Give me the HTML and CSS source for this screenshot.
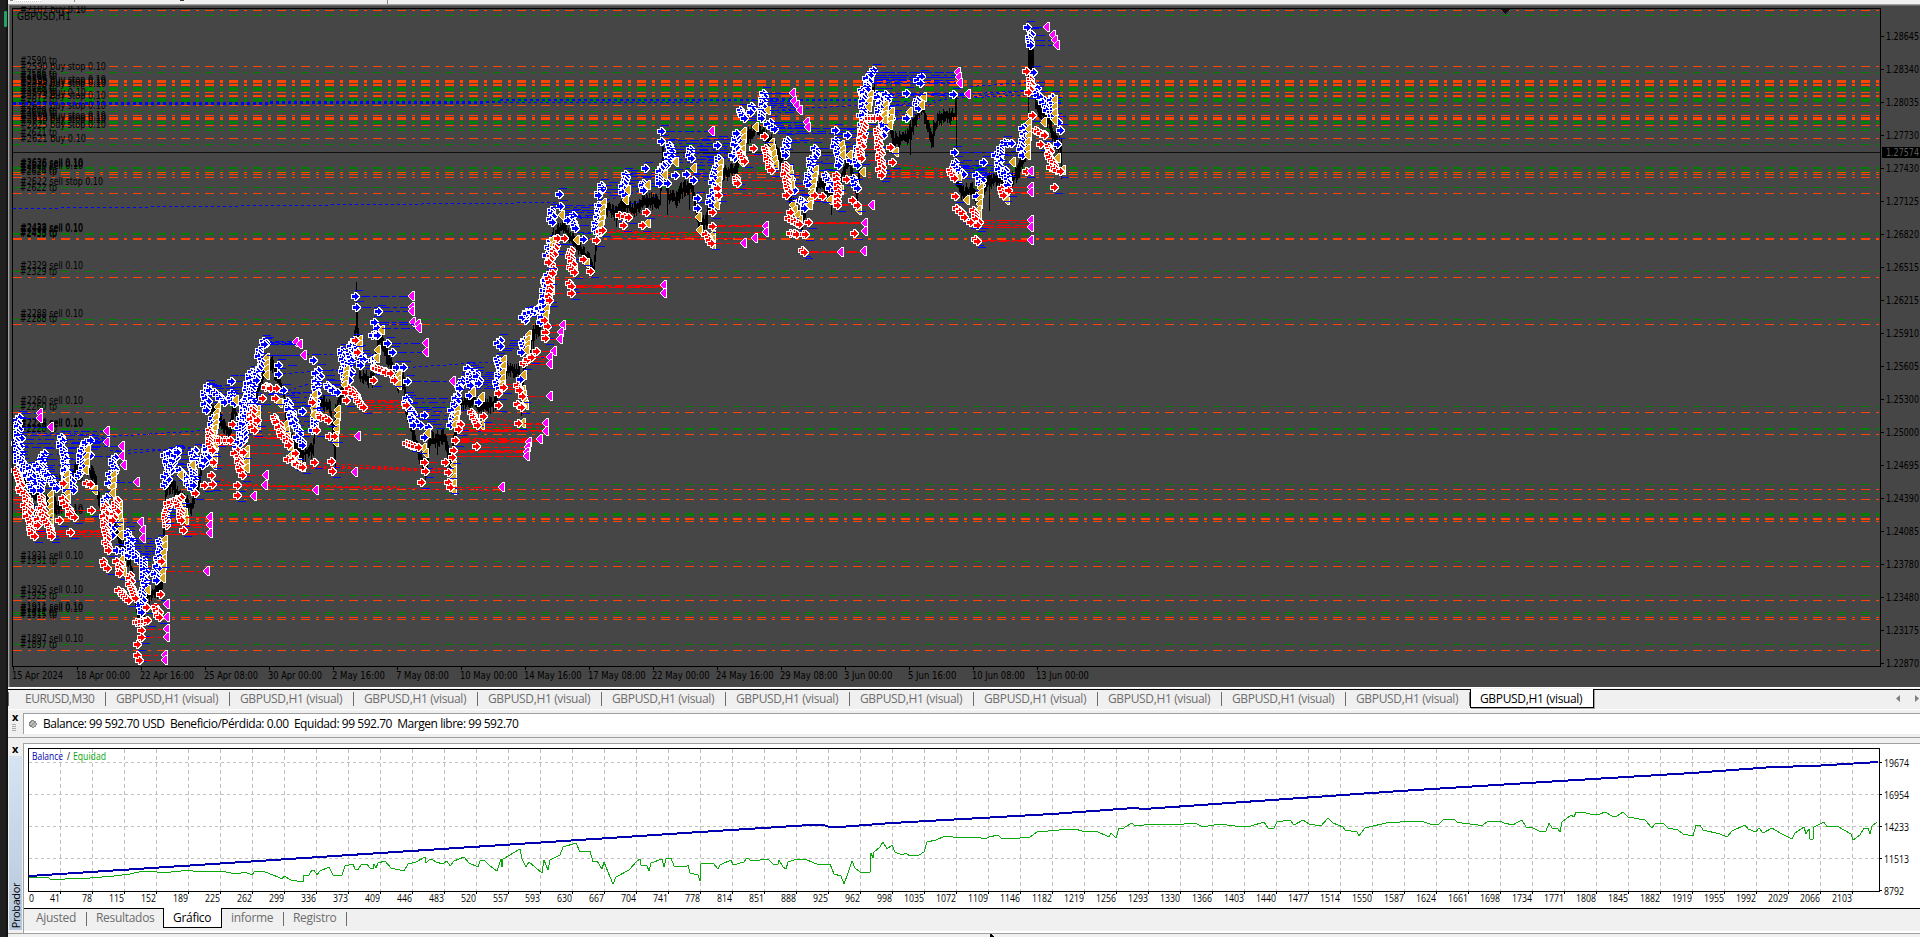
FILE: index.html
```html
<!DOCTYPE html>
<html lang="es">
<head>
    <meta charset="UTF-8">
    <meta name="viewport" content="width=device-width, initial-scale=1.0">
    <title>Probador - GBPUSD,H1 (visual)</title>
    <link rel="stylesheet" href="styles.css">
</head>
<body>
    <div class="edge"><span class="edge-mark"></span></div>
    <div class="app">
        <div class="toolbar">
            <span class="tool-a"></span><span class="tool-b"></span><span class="tool-c"></span><span class="tool-d"></span><span class="tool-e"></span>
        </div>
        <div class="chart-window">
            <svg id="price-chart" width="1911" height="681" viewBox="9 6 1911 681">
                <defs>
                    <g id="buy">
                        <path class="outline" d="M-4 -2h3v-2h3v1h1v1h1v1h1v3h-1v1h-1v1h-1v1h-3v-2h-3z"/>
                        <path fill="#0000ff" d="M-3 -1h3v-2h1v1h1v1h1v1h1v1h-1v1h-1v1h-1v1h-1v-2h-3z"/>
                    </g>
                    <g id="sell">
                        <path class="outline" d="M-4 -2h3v-2h3v1h1v1h1v1h1v3h-1v1h-1v1h-1v1h-3v-2h-3z"/>
                        <path fill="#ff0000" d="M-3 -1h3v-2h1v1h1v1h1v1h1v1h-1v1h-1v1h-1v1h-1v-2h-3z"/>
                    </g>
                    <g id="close">
                        <path class="outline" d="M-4 -1h1v-1h1v-1h1v-1h1v-1h3v10h-3v-1h-1v-1h-1v-1h-1v-1h-1z"/>
                        <path fill="#daa520" d="M-3 -1h1v-1h1v-1h1v-1h2v8h-2v-1h-1v-1h-1v-1h-1z"/>
                    </g>
                    <g id="exit">
                        <path class="outline" d="M-4 -1h1v-1h1v-1h1v-1h1v-1h3v10h-3v-1h-1v-1h-1v-1h-1v-1h-1z"/>
                        <path fill="#ff00ff" d="M-3 -1h1v-1h1v-1h1v-1h2v8h-2v-1h-1v-1h-1v-1h-1z"/>
                    </g>
                </defs>
            </svg>
        </div>
        <div class="chart-tabs" id="chart-tabs"></div>
        <div class="status">
            <div class="grip"><b>x</b><i></i></div>
            <div class="status-box">
                <svg width="8" height="8" viewBox="0 0 8 8"><circle cx="4" cy="4" r="3.2" fill="#bbb" stroke="#888"/><path d="M2 6L6 2" stroke="#888"/></svg>
                <span>Balance: 99 592.70 USD&nbsp; Beneficio/Pérdida: 0.00&nbsp; Equidad: 99 592.70&nbsp; Margen libre: 99 592.70</span>
            </div>
        </div>
        <div class="tester">
            <div class="tester-side"><b>x</b><div class="tester-title"><span>Probador</span></div></div>
            <div class="tester-main">
                <svg id="balance-chart" width="1896" height="164" viewBox="24 744 1896 164"></svg>
                <div class="tester-tabs">
                    <span class="tab t1">Ajusted</span>
                    <span class="tab t2">Resultados</span>
                    <span class="tab active t3">Gráfico</span>
                    <span class="tab t4">informe</span>
                    <span class="tab t5">Registro</span>
                </div>
            </div>
        </div>
        <div class="footer">
            <svg class="cursor" width="5" height="3" viewBox="0 0 5 3"><path d="M0 0h2v1h1v1h1v1h-4z" fill="#000"/></svg>
        </div>
    </div>
    <script src="chart.js"></script>
</body>
</html>
```
FILE: styles.css
```css
* {
    box-sizing: border-box;
}
body {
    margin: 0;
    width: 1920px;
    height: 937px;
    overflow: hidden;
    display: flex;
    background-color: #f0f0f0;
    font-family: "Open Sans", "Noto Sans", sans-serif;
    font-size: 12px;
    color: #000;
}
.edge {
    width: 8px;
    height: 937px;
    background: linear-gradient(90deg, #202020 6px, #121212 6px);
    padding-top: 11px;
}
.edge-mark {
    display: block;
    width: 3px;
    height: 16px;
    margin-left: 4px;
    border-radius: 1px;
    background-color: #21a366;
}
.app {
    width: 1912px;
    display: flex;
    flex-direction: column;
}
.toolbar {
    height: 4px;
    display: flex;
    background-color: #f0f0f0;
}
.toolbar span {
    height: 1px;
    background-color: #888;
}
.toolbar .tool-a {
    width: 3px;
    margin-left: 2px;
}
.toolbar .tool-b {
    width: 25px;
    height: 2px;
    margin-left: 3px;
    background-color: #fff;
    border-bottom: 1px dotted #ccc;
}
.toolbar .tool-c {
    width: 1px;
    height: 2px;
    margin-left: 33px;
}
.toolbar .tool-d {
    width: 4px;
    margin-left: 105px;
    background-color: #333;
}
.toolbar .tool-e {
    width: 1px;
    height: 4px;
    margin-left: 203px;
}
.chart-window {
    height: 683px;
    background-color: #464646;
    border-top: 1px solid #a0a0a0;
    border-left: 1px solid #a0a0a0;
    box-shadow: inset 1px 1px 0 #696969;
    padding-top: 1px;
}
svg {
    display: block;
    shape-rendering: crispEdges;
}
#price-chart text, #balance-chart text {
    font-family: "DejaVu Sans Condensed", "DejaVu Sans", sans-serif;
    font-stretch: condensed;
    font-size: 10px;
}
#balance-chart text {
    font-family: "Open Sans", sans-serif;
    font-stretch: normal;
}
.outline {
    fill: #fff;
}
.chart-tabs {
    height: 23px;
    display: flex;
    padding-top: 2px;
    border-top: 1px solid #fff;
    background: linear-gradient(#f0f0f0 1px, #000 1px, #000 2px, #f0f0f0 2px);
    border-bottom: 1px solid #fff;
    color: #6d6d6d;
    position: relative;
}
.chart-tabs .tab {
    width: 124px;
    height: 14px;
    margin-top: 2px;
    padding-left: 10px;
    line-height: 13px;
    letter-spacing: -0.35px;
    border-right: 1px solid #6d6d6d;
    white-space: nowrap;
}
.chart-tabs .tab:first-child {
    width: 98px;
    padding-left: 16px;
    letter-spacing: -0.5px;
    border-left: 1px solid #6d6d6d;
}
.chart-tabs .tab:nth-last-child(3) {
    border-right: 0;
}
.chart-tabs .active {
    height: 19px;
    margin-top: -1px;
    padding-top: 3px;
    padding-left: 9px;
    background-color: #fff;
    color: #000;
    border: 1px solid #000 !important;
    border-top: 0 !important;
    box-shadow: 1px 1px 0 #a0a0a0;
}
.scroll {
    width: 4px;
    height: 7px;
    background-color: #808080;
    margin: 5px 0 0 302px;
    clip-path: polygon(100% 0, 0 50%, 100% 100%);
}
.scroll.right {
    margin-left: 15px;
    clip-path: polygon(0 0, 100% 50%, 0 100%);
}
.status {
    height: 28px;
    display: flex;
    padding-top: 3px;
    border-bottom: 1px solid #a0a0a0;
}
.grip {
    width: 15px;
    padding-left: 4px;
}
.grip b, .tester-side b {
    display: block;
    height: 11px;
    font-size: 11px;
    line-height: 7px;
}
.grip i {
    display: block;
    width: 4px;
    height: 8px;
    background: repeating-linear-gradient(#aaa 0 1px, transparent 1px 2px);
}
.status-box {
    flex: 1;
    height: 21px;
    display: flex;
    align-items: center;
    padding-left: 5px;
    background-color: #fff;
    border-top: 1px solid #a0a0a0;
    border-left: 1px solid #a0a0a0;
    white-space: nowrap;
}
.status-box span {
    margin-left: 6px;
    margin-top: -1px;
    letter-spacing: -0.46px;
}
.tester {
    height: 190px;
    display: flex;
    margin-top: 5px;
}
.tester-side {
    width: 15px;
    padding: 2px 0 0 1px;
}
.tester-side b {
    padding-left: 3px;
}
.tester-title {
    width: 13px;
    height: 174px;
    background: linear-gradient(#d6e4f3, #b6c6da);
    writing-mode: vertical-rl;
    display: flex;
    align-items: center;
}
.tester-title span {
    transform: rotate(180deg);
    margin-top: 127px;
    line-height: 13px;
    font-size: 11px;
    letter-spacing: -0.4px;
}
.tester-main {
    width: 1897px;
    border-top: 1px solid #a0a0a0;
    border-left: 1px solid #a0a0a0;
    background-color: #fff;
}
.tester-tabs {
    height: 23px;
    display: flex;
    background-color: #f0f0f0;
    border-top: 1px solid #000;
    color: #6d6d6d;
    letter-spacing: -0.3px;
}
.tester-tabs .tab {
    height: 14px;
    margin-top: 3px;
    line-height: 12px;
    border-right: 1px solid #6d6d6d;
}
.tester-tabs .t1 {
    width: 63px;
    padding-left: 12px;
}
.tester-tabs .t2 {
    width: 76px;
    padding-left: 9px;
    border-right: 0;
}
.tester-tabs .active {
    width: 59px;
    height: 20px;
    margin-top: -1px;
    padding: 4px 0 0 9px;
    background-color: #fff;
    color: #000;
    border: 1px solid #000;
    border-top: 0;
}
.tester-tabs .t4 {
    width: 62px;
    padding-left: 9px;
}
.tester-tabs .t5 {
    width: 63px;
    padding-left: 9px;
}
.footer {
    height: 4px;
    border-top: 1px solid #a0a0a0;
    padding-left: 982px;
}
```
FILE: chart.js
```js
const NS = 'http://www.w3.org/2000/svg';
const chart = document.getElementById('price-chart');
const tester = document.getElementById('balance-chart');

const add = (svg, name, attrs, text) => {
    const node = document.createElementNS(NS, name);
    for (const key in attrs) node.setAttribute(key, attrs[key]);
    if (text !== undefined) node.textContent = text;
    svg.appendChild(node);
    return node;
};
const label = (svg, x, y, text, width, fill = '#000') =>
    add(svg, 'text', { x: x, y: y, fill: fill, textLength: width, lengthAdjust: 'spacingAndGlyphs' }, text);

let seed = 7;
const rnd = () => {
    seed = (seed * 16807) % 2147483647;
    return seed / 2147483647;
};

// order levels
const levels = (rows, color) => {
    const d = rows.map(y => `M13 ${y + 0.5}H1880`).join('');
    add(chart, 'path', { d: d, stroke: color, 'stroke-dasharray': '9 6 3 6', fill: 'none' });
};
levels([15, 72, 87, 88, 89, 90, 98, 99, 100, 101, 111, 121, 122, 123, 128, 130, 144, 167, 168, 171, 187, 233, 234, 271, 319,
    406, 428, 429, 484, 493, 513, 514, 515, 561, 595, 612, 614, 644], '#008000');
levels([10, 66, 80, 81, 82, 84, 85, 92, 95, 96, 105, 115, 117, 118, 119, 125, 138, 172, 174, 177, 193, 238, 239, 277, 324,
    412, 434, 489, 499, 518, 519, 521, 566, 600, 617, 619, 650], '#ff4500');
add(chart, 'path', { d: 'M13 152.5H1880', stroke: '#101010' });

// order labels
label(chart, 17, 20, 'GBPUSD,H1', 54);
const orders = [
    [13, '2107 buy 0.10'], [64, '2590 tp'], [70, '2590 buy stop 0.10'], [77, '2586 tp'], [79, '2588 tp'], [83, '2586 buy stop 0.10'],
    [85, '2593 buy stop 0.10'], [87, '2588 buy stop 0.10'], [91, '2579 tp'], [94, '2580 tp'], [96, '2579 buy 0.10'], [99, '2573 buy stop 0.10'],
    [103, '2617 tp'], [109, '2617 buy stop 0.10'], [114, '2609 tp'], [116, '2610 tp'], [119, '2609 buy stop 0.10'], [121, '2618 buy stop 0.10'],
    [123, '2610 buy stop 0.10'], [128, '2625 buy stop 0.10'], [136, '2621 tp'], [142, '2621 buy 0.10'],
    [166, '2628 sell 0.10'], [167, '2626 sell 0.10'], [169, '2620 sell 0.10'], [173, '2626 tp'], [175, '2624 tp'],
    [185, '2622 sell stop 0.10'], [191, '2622 tp'], [231, '2438 sell 0.10'], [232, '2433 sell 0.10'], [236, '2438 tp'], [237, '2433 tp'],
    [269, '2329 sell 0.10'], [275, '2329 tp'], [317, '2288 sell 0.10'], [322, '2288 tp'], [404, '2260 sell 0.10'], [410, '2260 tp'],
    [426, '2224 sell 0.10'], [427, '2228 sell 0.10'], [432, '2228 tp'], [482, '2107 sell 0.10'], [512, '2087 sell 0.10'], [514, '2084 sell 0.10'],
    [559, '1931 sell 0.10'], [564, '1931 tp'], [593, '1925 sell 0.10'], [599, '1925 tp'], [610, '1911 sell 0.10'], [612, '1916 sell 0.10'],
    [616, '1911 tp'], [618, '1915 tp'], [642, '1897 sell 0.10'], [648, '1897 tp']
];
orders.forEach(([y, text]) => {
    const width = text.includes('stop') ? (text.includes('buy') ? 86 : 83) : text.includes('sell') ? 63 : text.includes('buy') ? 66 : 37;
    label(chart, 20, y, '#' + text, width);
});

// long dashed trade lines
const dashed = (x1, y1, x2, y2, color, dash = '3 3', width = 1) =>
    add(chart, 'path', { d: `M${x1} ${y1 + 0.5}L${x2} ${y2 + 0.5}`, stroke: color, 'stroke-dasharray': dash, 'stroke-width': width });
[[13, 208, 560, 202], [95, 437, 205, 430], [110, 455, 205, 445], [110, 450, 190, 448], [270, 355, 345, 354], [277, 374, 350, 368],
 [288, 390, 320, 380], [407, 367, 500, 361], [590, 205, 660, 184], [770, 110, 870, 104], [810, 168, 860, 140],
 [890, 122, 953, 94], [890, 105, 1028, 90], [960, 94, 1028, 90], [970, 86, 1028, 82], [975, 97, 1035, 94],
 [568, 222, 660, 195], [700, 145, 740, 150], [20, 432, 95, 434], [250, 395, 315, 392]].forEach(l => dashed(...l, '#0000ff'));
[[13, 102, 270, 102], [270, 101, 500, 101], [500, 100, 870, 99]].forEach(l => dashed(...l, '#0000ff', '3 3', 2));
dashed(13, 104, 270, 104, '#0000ff', '3 3');
dashed(270, 103, 700, 102, '#0000ff', '3 3');
[[210, 485, 505, 490], [300, 465, 450, 472], [305, 468, 450, 468], [312, 462, 450, 470], [360, 402, 410, 400],
 [604, 230, 700, 238], [605, 229, 708, 235], [628, 213, 700, 218], [880, 162, 955, 170], [210, 475, 235, 484],
 [485, 416, 518, 422], [365, 404, 408, 407]].forEach(l => dashed(...l, '#ff0000'));
dashed(207, 484, 400, 487, '#ff0000', '3 3', 2);
dashed(300, 466, 450, 469, '#ff0000', '3 3', 2);

// bundles of horizontal links: x1, x2, y1, y2, count
const bundle = (list, color) => list.forEach(([x1, x2, y1, y2, n]) => {
    for (let i = 0; i < n; i++) {
        const y = Math.round(y1 + (y2 - y1) * (n > 1 ? i / (n - 1) : 0));
        dashed(x1 + Math.round(rnd() * 8), y, x2, y, color, ['9 3', '9 4 3 4', '14 3'][i % 3]);
    }
});
bundle([[18, 100, 435, 447, 4], [40, 62, 448, 488, 8], [65, 85, 442, 470, 6], [85, 107, 438, 443, 4], [108, 122, 446, 465, 3],
    [125, 160, 538, 556, 8], [160, 195, 450, 480, 8], [206, 236, 385, 402, 7], [233, 262, 375, 410, 7], [262, 297, 341, 344, 3],
    [264, 303, 355, 355, 1], [288, 318, 392, 430, 9], [283, 300, 365, 400, 2], [320, 347, 370, 395, 6], [360, 378, 355, 368, 5],
    [408, 452, 398, 428, 8], [460, 500, 372, 388, 9], [503, 524, 340, 350, 5], [526, 545, 312, 316, 3], [559, 600, 205, 217, 6],
    [573, 600, 225, 238, 3], [602, 628, 182, 195, 5], [624, 661, 170, 186, 6], [661, 715, 140, 162, 8], [690, 717, 165, 180, 5],
    [700, 738, 136, 160, 8], [741, 765, 116, 120, 3], [763, 797, 93, 112, 5], [768, 806, 122, 128, 3], [772, 865, 128, 133, 3],
    [785, 812, 140, 142, 2], [788, 815, 175, 190, 5], [815, 838, 148, 170, 4], [838, 865, 128, 160, 8], [870, 957, 72, 82, 5],
    [872, 920, 75, 79, 3], [878, 966, 93, 95, 2], [887, 920, 97, 118, 6], [955, 1002, 165, 175, 5], [954, 1000, 152, 152, 1],
    [1003, 1025, 142, 155, 4], [1040, 1062, 97, 118, 5], [962, 985, 160, 178, 4], [453, 478, 395, 410, 3]], '#0000ff');
bundle([[13, 25, 497, 515, 7], [32, 108, 530, 536, 4], [40, 108, 510, 520, 2], [52, 100, 531, 532, 2], [165, 209, 517, 534, 6],
    [235, 285, 420, 445, 4], [210, 288, 465, 466, 1], [245, 285, 453, 453, 1], [265, 285, 430, 438, 3], [362, 407, 400, 409, 5],
    [455, 526, 429, 431, 2], [455, 540, 438, 441, 3], [453, 527, 450, 451, 3], [452, 527, 456, 456, 1], [458, 545, 424, 430, 3],
    [425, 450, 462, 482, 3], [500, 518, 384, 389, 3], [523, 550, 356, 364, 4], [571, 664, 285, 287, 3], [571, 664, 293, 293, 1],
    [548, 570, 265, 293, 3], [604, 708, 232, 239, 3], [712, 766, 225, 238, 3], [712, 785, 212, 212, 1], [717, 785, 188, 195, 2],
    [735, 783, 155, 180, 4], [809, 865, 222, 223, 3], [803, 865, 252, 252, 2], [790, 836, 186, 200, 3], [837, 864, 204, 205, 2],
    [862, 885, 127, 160, 4], [882, 953, 170, 176, 3], [978, 1031, 220, 227, 4], [977, 1031, 240, 241, 2], [1005, 1031, 187, 192, 2],
    [962, 980, 208, 212, 3], [215, 236, 435, 445, 4]], '#ff0000');

// price bars
const price = [[16, 430], [24, 480], [35, 492], [58, 508], [70, 480], [82, 460], [95, 478], [100, 505], [112, 520], [122, 545], [130, 562], [136, 600],
    [140, 625], [148, 597], [162, 588], [163, 560], [166, 490], [172, 483], [182, 500], [192, 507], [200, 475], [212, 408], [222, 422], [229, 435],
    [234, 410], [245, 440], [255, 400], [266, 365], [272, 363], [284, 395], [288, 430], [300, 455], [313, 450], [318, 402], [330, 405], [334, 440],
    [335, 462], [336, 410], [350, 370], [356, 330], [356, 290], [358, 330], [360, 378], [372, 380], [380, 335], [387, 355], [398, 385], [404, 380],
    [406, 405], [415, 440], [426, 475], [430, 440], [445, 437], [450, 465], [460, 405], [470, 400], [482, 405], [495, 405], [502, 370], [519, 370],
    [522, 410], [524, 370], [533, 335], [541, 325], [548, 290], [552, 240], [563, 225], [572, 240], [585, 255], [594, 270], [598, 225], [608, 208],
    [616, 214], [625, 205], [634, 210], [645, 200], [660, 203], [663, 150], [668, 195], [676, 200], [682, 190], [692, 185], [698, 220], [706, 222],
    [714, 185], [725, 173], [737, 168], [744, 140], [756, 130], [770, 140], [781, 160], [784, 142], [790, 200], [802, 222], [812, 192], [821, 182],
    [832, 195], [842, 175], [849, 160], [857, 195], [866, 110], [873, 90], [890, 120], [893, 140], [905, 138], [911, 132], [922, 105], [932, 140],
    [938, 118], [955, 115], [956, 100], [957, 180], [964, 195], [972, 188], [980, 205], [988, 182], [1000, 178], [1010, 185], [1020, 168],
    [1028, 145], [1028, 60], [1033, 52], [1036, 105], [1048, 120], [1055, 140], [1061, 145], [1062, 175]];
let bars = '';
for (let i = 1; i < price.length; i++) {
    const [xa, ya] = price[i - 1], [xb, yb] = price[i];
    const steps = Math.max(1, Math.round(xb - xa));
    for (let s = 0; s < steps; s++) {
        const x = Math.round(xa + (xb - xa) * s / steps);
        const y1 = ya + (yb - ya) * s / steps, y2 = ya + (yb - ya) * (s + 1) / steps;
        bars += `M${x + 0.5} ${Math.round(Math.min(y1, y2) - 1 - rnd() * 8)}V${Math.round(Math.max(y1, y2) + 1 + rnd() * 8)}`;
    }
}
bars += 'M334.5 420V460M437.5 430V455M667.5 160V215M689.5 180V210M910.5 110V155M933.5 120V147M989.5 180V211M533.5 330V352M616.5 210V227M831.5 190V215';
add(chart, 'path', { d: bars, stroke: '#000', fill: 'none' });
add(chart, 'path', { d: 'M1028 48h3l3 12 1 15h-7zM956 97h1v60h-1zM1028 80h1v50h-1z', fill: '#000' });

// runs of markers: x1, y1, x2, y2, count (one marker when only x, y)
const gap = { buy: 2.9, sell: 2.9, close: 6 };
const place = (kind, list, spread) => list.forEach(([x1, y1, x2 = x1, y2 = y1, n]) => {
    const count = n || Math.max(1, Math.round(Math.hypot(x2 - x1, y2 - y1) / gap[kind]) + 1);
    for (let i = 0; i < count; i++) {
        const t = count > 1 ? i / (count - 1) : 0;
        const x = Math.round(x1 + (x2 - x1) * t + (count > 1 ? (rnd() - 0.5) * spread : 0));
        const y = Math.round(y1 + (y2 - y1) * t);
        if (kind === 'buy' && (i === 0 || rnd() < 0.35)) {
            add(chart, 'path', { d: `M${x} ${y - 5.5}h8`, stroke: '#0000ff' });
        }
        if (kind === 'sell' && (i === count - 1 || rnd() < 0.2)) {
            add(chart, 'path', { d: `M${x + 1} ${y + 6.5}h8`, stroke: '#0000ff' });
        }
        add(chart, 'use', { href: '#' + kind, x: x, y: y });
    }
});

place('buy', [[17, 417, 20, 458], [16, 440, 20, 470], [20, 457, 35, 487], [30, 468, 33, 490], [42, 453, 42, 490], [38, 465, 58, 488], [61, 437, 66, 490],
    [66, 470, 72, 490], [80, 475, 82, 444], [84, 444, 90, 440], [90, 455], [114, 457, 110, 486], [104, 497, 112, 535], [118, 550, 128, 555],
    [126, 532, 136, 560], [145, 560, 140, 612], [160, 541, 156, 580], [165, 485, 168, 458], [166, 455, 176, 450], [170, 470, 176, 452],
    [181, 470, 190, 488], [195, 450, 191, 485], [204, 465, 207, 450], [206, 386, 206, 410], [210, 390, 223, 402], [214, 418, 206, 460],
    [231, 381], [231, 393, 234, 403], [238, 450, 242, 403], [242, 440, 250, 372], [250, 372, 253, 415], [261, 350, 258, 380], [262, 341, 266, 344],
    [278, 365], [278, 374], [283, 390], [288, 401, 290, 415], [290, 415, 302, 445], [302, 411], [313, 360], [318, 370, 313, 430], [326, 385, 335, 392],
    [343, 350, 343, 380], [352, 340, 348, 380], [355, 296], [356, 307], [378, 311], [374, 322], [377, 328], [372, 335, 378, 335], [387, 343],
    [392, 352], [358, 345, 362, 365], [370, 360, 374, 358], [396, 367], [403, 367], [407, 381], [405, 398, 415, 425], [424, 415], [420, 425],
    [428, 427], [424, 437], [460, 380, 460, 388], [455, 395, 451, 425], [468, 368, 470, 385], [478, 373, 479, 383], [478, 402], [469, 395],
    [499, 340, 500, 346], [499, 359, 497, 388], [523, 340, 521, 352], [520, 379], [523, 320, 526, 312], [528, 313, 541, 307], [545, 275, 543, 290],
    [546, 275, 542, 322, 10], [559, 194], [560, 206], [552, 210, 550, 222], [573, 215, 573, 228], [567, 220], [550, 241, 547, 255], [583, 239],
    [601, 185, 597, 195], [598, 205, 596, 232], [600, 205], [623, 174, 624, 195], [645, 168], [645, 183, 643, 190], [661, 131], [661, 141],
    [671, 145, 667, 165], [661, 165, 660, 183], [667, 183], [675, 175], [686, 174], [691, 149, 690, 158], [693, 180], [697, 198], [697, 208],
    [717, 145], [717, 158, 711, 205], [734, 158, 738, 133], [740, 110, 742, 118], [752, 106, 752, 112], [763, 93, 762, 118], [768, 122, 773, 129],
    [785, 140, 787, 155], [787, 170, 792, 190], [798, 200, 807, 205], [804, 208], [815, 148, 811, 165], [812, 165, 808, 185], [835, 130], [834, 140, 840, 165],
    [825, 175, 833, 190], [847, 135], [850, 160], [855, 178, 856, 188], [872, 70, 862, 93], [868, 75, 862, 115], [864, 115, 857, 165],
    [878, 94, 880, 115], [887, 94, 882, 135], [891, 118], [906, 93], [906, 118], [919, 76, 919, 83], [918, 100, 917, 108], [953, 94], [954, 152],
    [955, 162, 962, 173], [963, 174], [978, 175, 982, 185], [976, 196], [983, 162], [995, 155], [1003, 142, 1010, 143], [1001, 148, 1000, 175],
    [1005, 170, 1006, 185], [1025, 125, 1021, 155], [1033, 72], [1037, 88], [1038, 92, 1050, 115], [1050, 97, 1054, 115], [1058, 122], [1060, 130],
    [1057, 144], [1027, 27], [1030, 34, 1028, 45]], 5);

place('close', [[30, 503, 31, 517], [51, 495, 51, 530], [67, 475, 68, 505], [88, 450, 86, 470], [95, 490], [114, 475, 113, 493], [120, 505, 121, 535],
    [122, 560, 124, 572], [148, 590], [165, 540, 163, 578], [181, 475], [182, 500, 186, 520], [193, 465], [218, 407, 213, 440], [216, 440, 214, 465],
    [236, 400], [247, 450, 247, 468], [267, 358, 267, 375], [258, 410, 258, 425], [280, 403], [286, 425, 292, 455], [292, 455, 303, 467], [315, 395, 314, 415],
    [338, 410, 336, 442], [347, 370, 345, 385], [360, 340, 360, 350], [382, 330], [378, 350, 377, 358], [399, 375, 399, 385], [428, 433],
    [424, 448, 426, 453], [458, 410, 455, 425], [454, 465, 454, 490], [473, 392], [482, 397], [482, 425], [504, 360, 502, 385], [529, 335, 527, 350],
    [524, 375], [523, 390, 526, 405], [523, 423], [548, 302, 546, 315], [552, 275, 552, 290], [553, 240, 553, 255], [562, 215], [577, 240], [575, 268],
    [587, 263], [604, 203, 601, 225], [628, 190], [626, 200], [648, 185], [648, 223], [665, 175], [676, 162], [694, 168], [699, 217], [700, 230],
    [713, 235, 713, 245], [721, 163, 717, 205], [744, 132, 742, 162], [756, 127], [768, 110], [772, 143, 776, 165], [790, 170, 792, 185],
    [793, 205, 800, 220], [816, 170, 810, 205], [830, 200], [842, 145, 843, 155], [850, 155], [841, 190], [859, 210], [863, 172], [871, 95, 869, 107],
    [886, 105, 885, 120], [892, 112, 890, 125], [896, 152], [910, 112], [924, 97, 922, 105], [959, 178], [967, 200], [981, 188, 979, 215], [1007, 200],
    [1013, 162], [1029, 123, 1028, 155], [1044, 122], [1055, 100, 1055, 120], [1058, 158], [1063, 170]], 0);

place('sell', [[16, 470, 20, 485], [20, 485, 30, 510], [24, 505, 34, 536], [42, 497, 38, 525], [42, 508, 51, 536], [59, 520], [70, 532], [62, 498, 72, 517], [63, 483],
    [86, 483, 90, 484], [91, 510], [104, 505, 108, 550], [117, 500, 113, 520], [104, 561, 105, 568], [117, 561, 121, 573], [128, 575, 136, 598],
    [118, 590, 128, 600], [146, 607], [136, 622, 146, 620], [141, 630], [141, 637], [137, 644], [137, 655], [139, 660], [161, 561], [160, 594], [154, 607, 160, 617],
    [165, 525, 168, 503], [168, 503, 180, 497], [178, 500, 182, 520], [183, 530], [195, 493], [204, 485], [211, 475], [212, 484], [208, 430, 210, 450],
    [213, 462], [217, 440, 230, 440], [232, 424], [235, 450, 241, 470], [243, 452], [237, 485], [242, 475], [237, 495], [252, 408, 252, 430],
    [257, 420], [264, 386, 274, 388], [262, 398], [275, 398], [275, 417, 288, 445], [295, 453], [289, 459, 303, 467], [314, 462], [312, 402],
    [318, 415, 326, 420], [316, 430], [331, 461], [332, 471], [329, 436], [334, 436], [355, 340], [357, 352], [345, 392], [346, 400],
    [350, 388, 362, 407], [374, 367, 390, 373], [373, 380], [394, 380], [406, 405], [407, 443, 417, 447], [424, 462], [425, 471], [421, 482],
    [445, 462], [448, 472], [448, 482], [450, 487], [455, 440], [453, 450], [452, 457], [460, 424], [458, 429], [470, 412, 478, 425], [483, 416],
    [476, 446], [498, 405], [498, 393], [503, 387], [517, 385, 518, 390], [522, 396], [518, 404, 522, 407], [518, 423], [523, 363, 530, 357], [536, 351],
    [544, 320], [547, 326], [545, 332], [545, 338], [551, 264, 548, 300, 9], [556, 245, 550, 262], [557, 238], [564, 238], [569, 250, 573, 272], [583, 259], [590, 271],
    [569, 283], [571, 286], [571, 293], [596, 240], [599, 232, 603, 230], [621, 215, 627, 217], [623, 225], [642, 225], [646, 212],
    [706, 234, 710, 243], [712, 226], [712, 212], [717, 188], [718, 195], [738, 178, 737, 183], [740, 153, 744, 161], [753, 148], [764, 136], [765, 148, 771, 170],
    [784, 165, 788, 195], [790, 212], [788, 218, 798, 224], [792, 233, 804, 234], [808, 222], [802, 250], [804, 252], [814, 195], [822, 196],
    [836, 175, 837, 205, 8], [846, 179], [854, 233], [852, 200], [857, 205], [863, 122, 860, 158], [868, 118, 878, 118], [879, 130, 881, 175],
    [890, 147], [892, 162], [951, 170, 953, 178], [955, 196], [955, 208, 962, 213], [964, 217], [974, 210, 979, 225], [1003, 188, 1003, 195], [1008, 190],
    [1026, 71], [1031, 79, 1028, 92], [1032, 115], [1035, 130, 1045, 135], [1040, 144], [1048, 146, 1052, 165], [1050, 167, 1059, 171],
    [1054, 187], [1026, 171], [975, 239], [977, 241], [970, 222]], 4);

// exits: x, y, start of the link, link colour
const exits = [[40, 413, 20, 'b'], [40, 418, 20, 'b'], [51, 427, 20, 'b'], [107, 431, 60, 'b'], [107, 442, 90, 'b'], [122, 446, 90, 'b'], [122, 456, 92, 'b'],
    [124, 465, 116, 'b'], [137, 482, 114, 'b'], [141, 522, 112, 'b'], [143, 530, 124, 'b'], [143, 538, 126, 'b'], [210, 517, 184, 'r'], [210, 525, 170, 'r'],
    [210, 533, 186, 'r'], [207, 571, 164, 'r'], [167, 604, 150, 'r'], [167, 617, 162, 'r'], [167, 629, 144, 'r'], [167, 637, 143, 'r'], [165, 655, 140, 'r'],
    [165, 660, 142, 'r'], [296, 342, 268, 'b'], [300, 344, 268, 'b'], [304, 355, 265, 'b'], [266, 475, 245, 'r'], [265, 485, 240, 'r'], [254, 496, 240, 'r'],
    [316, 490, 304, 'r'], [358, 436, 337, 'r'], [355, 472, 335, 'r'], [412, 296, 359, 'b'], [412, 307, 360, 'b'], [412, 311, 382, 'b'], [413, 322, 378, 'b'],
    [418, 324, 378, 'b'], [419, 328, 380, 'b'], [426, 343, 390, 'b'], [426, 352, 396, 'b'], [453, 381, 410, 'b'], [502, 487, 452, 'r'], [563, 325, 549, 'r'],
    [561, 332, 548, 'r'], [560, 339, 548, 'r'], [554, 351, 540, 'r'], [550, 357, 530, 'r'], [550, 364, 526, 'r'], [550, 396, 526, 'r'], [546, 423, 522, 'r'],
    [546, 431, 460, 'r'], [540, 439, 458, 'r'], [529, 442, 458, 'r'], [528, 447, 480, 'r'], [527, 452, 456, 'r'], [527, 456, 455, 'r'], [664, 285, 575, 'r'],
    [664, 293, 575, 'r'], [712, 131, 664, 'b'], [793, 93, 766, 'b'], [794, 101, 766, 'b'], [797, 105, 766, 'b'], [800, 110, 768, 'b'], [807, 122, 772, 'b'],
    [808, 127, 774, 'b'], [766, 226, 714, 'r'], [766, 232, 714, 'r'], [755, 238, 714, 'r'], [744, 243, 712, 'r'], [872, 205, 860, 'r'], [865, 223, 812, 'r'],
    [865, 231, 858, 'r'], [864, 251, 808, 'r'], [841, 252, 808, 'r'], [958, 72, 876, 'b'], [959, 77, 876, 'b'], [960, 83, 870, 'b'], [968, 94, 908, 'b'],
    [1031, 171, 1028, 'r'], [1031, 187, 1008, 'r'], [1031, 192, 1008, 'r'], [1031, 220, 982, 'r'], [1031, 227, 982, 'r'], [1031, 240, 980, 'r'],
    [1047, 27, 1031, 'b'], [1053, 35, 1034, 'b'], [1055, 40, 1034, 'b'], [1057, 45, 1034, 'b']];
exits.forEach(([x, y, from, color]) => {
    dashed(from + 2, y, x - 3, y, color === 'b' ? '#0000ff' : '#ff0000', '9 3 4 3');
    add(chart, 'use', { href: '#exit', x: x, y: y });
});

// frame and axes
add(chart, 'path', { d: 'M12 8.5H1881M12.5 8V667M12 666.5H1881M1880.5 8V667', stroke: '#000', fill: 'none' });
add(chart, 'path', { d: 'M1501 9h9v1h-1v1h-1v1h-1v1h-1v1h-1v-1h-1v-1h-1v-1h-1v-1h-1z', fill: '#101010' });
['1.28645', '1.28340', '1.28035', '1.27730', '1.27430', '1.27125', '1.26820', '1.26515', '1.26215', '1.25910', '1.25605', '1.25300', '1.25000',
 '1.24695', '1.24390', '1.24085', '1.23780', '1.23480', '1.23175', '1.22870'].forEach((text, i) => {
    const y = 36 + i * 33;
    add(chart, 'path', { d: `M1881 ${y + 0.5}h3`, stroke: '#000' });
    label(chart, 1886, y + 4, text, 33);
});
add(chart, 'path', { d: 'M1882 147h38v11h-38z', fill: '#000' });
label(chart, 1886, 156, '1.27574', 33, '#5c5c5c');
['15 Apr 2024', '18 Apr 00:00', '22 Apr 16:00', '25 Apr 08:00', '30 Apr 00:00', '2 May 16:00', '7 May 08:00', '10 May 00:00', '14 May 16:00',
 '17 May 08:00', '22 May 00:00', '24 May 16:00', '29 May 08:00', '3 Jun 00:00', '5 Jun 16:00', '10 Jun 08:00', '13 Jun 00:00'].forEach((text, i) => {
    const x = 13 + i * 64;
    add(chart, 'path', { d: `M${x + 0.5} 667v3`, stroke: '#000' });
    const width = i === 0 ? 51 : text.includes('Jun') ? text.length * 4.4 : text.includes('May') ? text.length * 4.8 : 54;
    label(chart, x - 1, 679, text, width);
});

// tester graph
let grid = '';
for (let x = 60; x <= 1852; x += 32) grid += `M${x + 0.5} 749V891`;
add(tester, 'path', { d: grid, stroke: '#c0c0c0', 'stroke-dasharray': '4 3' });
add(tester, 'path', { d: 'M29 762.5H1879M29 794.5H1879M29 826.5H1879M29 858.5H1879', stroke: '#c0c0c0', 'stroke-dasharray': '3 3' });

const equity = '29,877 48,877 50,879 58,880 65,879 90,878 114,876 130,874 143,871 150,871 157,872 171,872 192,870 194,872 220,871 237,874 245,872 252,875 255,871 265,872 278,877 282,879 284,876 291,880 303,882 304,875 309,875 312,870 314,870 317,875 320,871 329,867 333,875 342,875 345,866 353,864 355,869 358,870 361,865 367,864 370,868 373,869 374,864 376,868 378,863 385,861 391,868 404,871 408,864 416,862 425,857 426,863 429,860 432,859 436,862 443,864 447,861 450,866 454,861 464,857 469,863 478,867 480,861 484,860 490,866 497,871 501,859 502,867 503,859 520,849 522,859 526,867 529,862 542,873 544,860 548,870 550,860 560,855 563,847 576,843 580,852 590,851 593,862 597,861 602,869 604,862 608,872 613,884 616,877 629,870 637,861 640,859 641,865 647,866 649,871 651,863 662,859 664,867 666,859 671,858 674,866 686,867 688,865 690,873 698,875 700,881 701,864 713,863 718,869 720,865 731,860 733,865 744,862 747,858 752,861 768,859 773,864 778,864 779,860 783,867 786,869 788,862 797,859 807,860 819,865 830,864 834,874 841,876 844,884 848,873 852,861 855,868 860,872 870,872 871,853 873,858 874,852 880,847 883,842 887,849 892,845 895,852 902,855 906,853 910,856 919,855 924,852 927,842 936,840 945,836 953,837 977,837 985,839 989,837 998,835 1001,838 1020,838 1030,837 1037,832 1059,830 1075,829 1082,831 1096,831 1109,837 1111,833 1116,838 1119,828 1122,829 1132,823 1135,826 1154,824 1173,825 1195,823 1203,827 1219,824 1235,826 1251,826 1264,822 1268,828 1274,828 1277,822 1290,820 1294,825 1303,820 1309,824 1321,826 1328,818 1333,823 1343,827 1345,830 1357,832 1359,836 1365,828 1386,823 1400,822 1421,821 1430,824 1439,824 1443,820 1454,819 1457,822 1462,823 1478,825 1483,825 1488,821 1500,821 1504,823 1513,825 1516,823 1522,820 1526,827 1533,828 1541,832 1546,831 1549,823 1552,828 1558,829 1560,832 1562,822 1571,815 1574,817 1576,812 1582,812 1590,814 1600,814 1605,812 1612,816 1617,816 1623,812 1628,817 1645,820 1652,828 1655,824 1663,823 1668,828 1678,830 1683,834 1693,836 1696,825 1700,825 1703,830 1720,834 1727,837 1732,831 1745,825 1748,829 1756,832 1759,828 1763,833 1772,828 1780,833 1792,839 1795,833 1804,827 1806,834 1809,829 1810,839 1813,839 1814,827 1824,822 1827,827 1837,826 1851,834 1853,840 1860,835 1864,828 1868,828 1870,834 1872,826 1877,822';
add(tester, 'polyline', { points: equity, fill: 'none', stroke: '#0aa80a' });
add(tester, 'polyline', {
    points: '29,876 60,874 640,836 700,832 810,825 824,825 829,827 839,827 892,823 1052,814 1134,808 1144,809 1400,791 1560,781 1692,773 1773,767 1813,766 1878,762',
    fill: 'none', stroke: '#0000b0', 'stroke-width': 2
});
add(tester, 'path', { d: 'M28 748.5H1880M28.5 748V892M28 891.5H1880M1879.5 748V892', stroke: '#000', fill: 'none' });
label(tester, 32, 760, 'Balance', 31, '#0000b0');
label(tester, 67, 760, '/', 3);
label(tester, 73, 760, 'Equidad', 33, '#0aa80a');
['19674', '16954', '14233', '11513', '8792'].forEach((text, i) => {
    label(tester, 1884, 767 + i * 32, text, text.length * 5);
    add(tester, 'path', { d: `M1880 ${762.5 + i * 32}h2`, stroke: '#000' });
});
label(tester, 29, 902, '0', 5);
'41 78 115 152 189 225 262 299 336 373 409 446 483 520 557 593 630 667 704 741 778 814 851 888 925 962 998 1035 1072 1109 1146 1182 1219 1256 1293 1330 1366 1403 1440 1477 1514 1550 1587 1624 1661 1698 1734 1771 1808 1845 1882 1919 1955 1992 2029 2066 2103'.split(' ').forEach((text, i) => {
    const x = 60 + i * 32;
    add(tester, 'path', { d: `M${x + 0.5} 892v2`, stroke: '#000' });
    label(tester, x - text.length * 5, 902, text, text.length * 5);
});

// chart window tabs
const tabs = document.getElementById('chart-tabs');
const names = ['EURUSD,M30'].concat(Array(12).fill('GBPUSD,H1 (visual)'));
tabs.innerHTML = names.map((name, i) => `<span class="tab${i === 12 ? ' active' : ''}">${name}</span>`).join('')
    + '<span class="scroll"></span><span class="scroll right"></span>';
```
